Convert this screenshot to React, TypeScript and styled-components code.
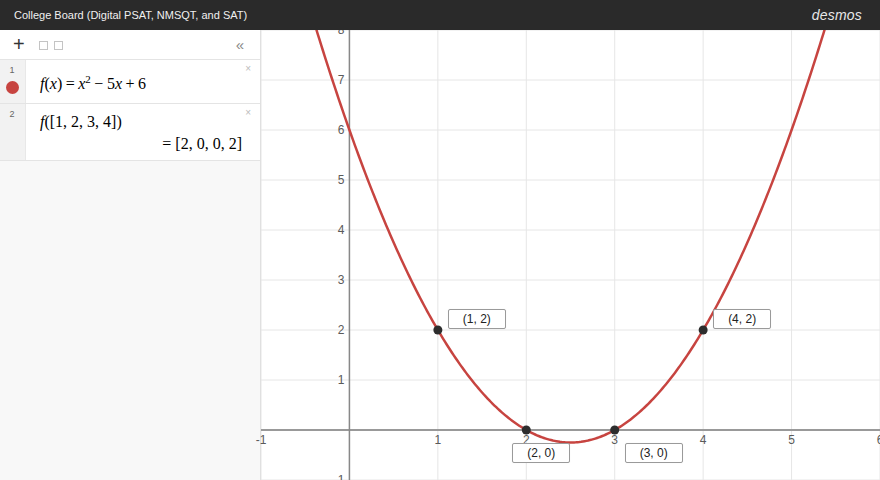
import React from 'react';
import styled, { createGlobalStyle } from 'styled-components';

const GRAPH_W = 619;
const GRAPH_H = 450;
const X_MIN = -1;
const X_MAX = 6;
const Y_MIN = -1;
const Y_MAX = 8;

const sx = (x: number) => ((x - X_MIN) / (X_MAX - X_MIN)) * GRAPH_W;
const sy = (y: number) => ((Y_MAX - y) / (Y_MAX - Y_MIN)) * GRAPH_H;

const f = (x: number) => x * x - 5 * x + 6;

const curvePath = () => {
  const pts: string[] = [];
  for (let x = -1; x <= 6.001; x += 0.02) {
    const y = f(x);
    if (y > Y_MAX + 1) continue;
    pts.push(`${pts.length ? 'L' : 'M'}${sx(x).toFixed(2)},${sy(y).toFixed(2)}`);
  }
  return pts.join(' ');
};

const points = [
  { x: 1, y: 2, label: '(1, 2)', dx: 10, dy: -21 },
  { x: 2, y: 0, label: '(2, 0)', dx: -14, dy: 13 },
  { x: 3, y: 0, label: '(3, 0)', dx: 10, dy: 13 },
  { x: 4, y: 2, label: '(4, 2)', dx: 10, dy: -21 },
];

const GlobalStyle = createGlobalStyle`
  body {
    margin: 0;
    font-family: "Liberation Sans", Arial, sans-serif;
    background: #fff;
  }
`;

const Page = styled.div`
  width: 880px;
  height: 480px;
  display: flex;
  flex-direction: column;
  overflow: hidden;
`;

const Header = styled.header`
  position: relative;
  z-index: 2;
  height: 30px;
  flex: 0 0 30px;
  background: #2a2a2a;
  display: flex;
  align-items: center;
  justify-content: space-between;
  padding: 0 18px 0 14px;
`;

const Title = styled.span`
  color: #f0f0f0;
  font-size: 11px;
`;

const Brand = styled.span`
  color: #e8e8e8;
  font-size: 14px;
  font-style: italic;
  letter-spacing: 0.2px;
`;

const Main = styled.div`
  flex: 1;
  display: flex;
  min-height: 0;
`;

const Sidebar = styled.aside`
  width: 260px;
  flex: 0 0 260px;
  background: #f8f8f8;
  border-right: 1px solid #e0e0e0;
  display: flex;
  flex-direction: column;
`;

const Toolbar = styled.div`
  height: 29px;
  background: #fff;
  border-bottom: 1px solid #e4e4e4;
  display: flex;
  align-items: center;
  padding: 0 16px 0 13px;
`;

const Plus = styled.span`
  font-size: 20px;
  color: #333;
  line-height: 1;
  margin-top: -2px;
`;

const Squares = styled.div`
  display: flex;
  gap: 6px;
  margin-left: 14px;
  margin-top: 2px;
`;

const Square = styled.span`
  width: 7px;
  height: 7px;
  border: 1px solid #c4c4c4;
`;

const Collapse = styled.span`
  margin-left: auto;
  color: #8a8a8a;
  font-size: 15px;
  line-height: 1;
`;

const Row = styled.div<{ $height: number }>`
  height: ${({ $height }) => $height}px;
  display: flex;
  background: #fff;
  border-bottom: 1px solid #e4e4e4;
`;

const Gutter = styled.div`
  width: 25px;
  flex: 0 0 25px;
  background: #f2f2f2;
  border-right: 1px solid #e8e8e8;
  display: flex;
  flex-direction: column;
  align-items: center;
`;

const RowNumber = styled.span`
  font-size: 9px;
  color: #666;
  margin-top: 5px;
  margin-right: 1px;
`;

const ColorDot = styled.span`
  width: 13px;
  height: 13px;
  border-radius: 50%;
  background: #c74440;
  margin-top: 6px;
`;

const Content = styled.div<{ $top: number }>`
  flex: 1;
  position: relative;
  padding: ${({ $top }) => $top}px 14px 0 14px;
  font-family: "Liberation Serif", "Times New Roman", serif;
  font-size: 16px;
  color: #000;
`;

const Close = styled.span`
  position: absolute;
  top: 3px;
  right: 9px;
  font-family: "Liberation Sans", Arial, sans-serif;
  font-size: 10px;
  color: #bbb;
`;

const MathLine = styled.div`
  line-height: 20px;
`;

const Result = styled.div`
  text-align: right;
  margin-top: 2px;
  padding-right: 4px;
  line-height: 20px;
`;

const V = styled.i`
  font-style: italic;
`;

const Op = styled.span`
  margin: 0 -0.5px;
`;

const Sup = styled.sup`
  font-size: 11px;
  vertical-align: 6px;
  line-height: 0;
`;

const Graph = styled.div`
  flex: 1;
  position: relative;
  z-index: 1;
`;

const Paper = styled.svg`
  display: block;
  overflow: visible;
`;

const PointLabel = styled.div`
  position: absolute;
  width: 56px;
  height: 18px;
  border: 1px solid #9a9a9a;
  border-radius: 2px;
  background: #fff;
  box-shadow: 0 0 1px rgba(0, 0, 0, 0.1);
  font-size: 12px;
  color: #222;
  display: flex;
  align-items: center;
  justify-content: center;
`;

const AxisText = styled.text`
  font-family: "Liberation Sans", Arial, sans-serif;
  font-size: 12px;
  fill: #5a5a5a;
`;

const GraphPaper = () => {
  const xs = [-1, 0, 1, 2, 3, 4, 5, 6];
  const ys = [-1, 0, 1, 2, 3, 4, 5, 6, 7, 8];
  const ox = sx(0);
  const oy = sy(0);
  return (
    <Paper width={GRAPH_W} height={GRAPH_H}>
      <defs>
        <clipPath id="plot">
          <rect x={0} y={0} width={GRAPH_W} height={GRAPH_H} />
        </clipPath>
      </defs>
      <g clipPath="url(#plot)">
        {xs.map((x) => (
          <line key={`gx${x}`} x1={sx(x)} x2={sx(x)} y1={0} y2={GRAPH_H} stroke="#e6e6e6" strokeWidth={1} />
        ))}
        {ys.map((y) => (
          <line key={`gy${y}`} x1={0} x2={GRAPH_W} y1={sy(y)} y2={sy(y)} stroke="#e6e6e6" strokeWidth={1} />
        ))}
        <line x1={0} x2={GRAPH_W} y1={oy} y2={oy} stroke="#999" strokeWidth={2} />
        <line x1={ox} x2={ox} y1={0} y2={GRAPH_H} stroke="#888" strokeWidth={1.5} />
      </g>
      {xs
        .filter((x) => x !== 0)
        .map((x) => (
          <AxisText key={`lx${x}`} x={sx(x)} y={oy + 14} textAnchor="middle">
            {x < 0 ? `-${-x}` : x}
          </AxisText>
        ))}
      {ys
        .filter((y) => y !== 0)
        .map((y) => (
          <AxisText key={`ly${y}`} x={ox - 5} y={sy(y) + 4} textAnchor="end">
            {y < 0 ? `-${-y}` : y}
          </AxisText>
        ))}
      <g clipPath="url(#plot)">
        <path d={curvePath()} fill="none" stroke="#c74440" strokeWidth={2.5} />
        {points.map((p) => (
          <circle key={p.label} cx={sx(p.x)} cy={sy(p.y)} r={4.5} fill="#2d2d2d" />
        ))}
      </g>
    </Paper>
  );
};

const App = () => {
  return (
    <>
      <GlobalStyle />
      <Page>
        <Header>
          <Title>College Board (Digital PSAT, NMSQT, and SAT)</Title>
          <Brand>desmos</Brand>
        </Header>
        <Main>
          <Sidebar>
            <Toolbar>
              <Plus>+</Plus>
              <Squares>
                <Square />
                <Square />
              </Squares>
              <Collapse>«</Collapse>
            </Toolbar>
            <Row $height={43}>
              <Gutter>
                <RowNumber>1</RowNumber>
                <ColorDot />
              </Gutter>
              <Content $top={14}>
                <Close>×</Close>
                <MathLine>
                  <V>f</V>(<V>x</V>) <Op>=</Op> <V>x</V>
                  <Sup>2</Sup> <Op>−</Op> 5<V>x</V> <Op>+</Op> 6
                </MathLine>
              </Content>
            </Row>
            <Row $height={56}>
              <Gutter>
                <RowNumber>2</RowNumber>
              </Gutter>
              <Content $top={8}>
                <Close>×</Close>
                <MathLine>
                  <V>f</V>([1, 2, 3, 4])
                </MathLine>
                <Result>= [2, 0, 0, 2]</Result>
              </Content>
            </Row>
          </Sidebar>
          <Graph>
            <GraphPaper />
            {points.map((p) => (
              <PointLabel
                key={p.label}
                style={{ left: sx(p.x) + p.dx, top: sy(p.y) + p.dy }}
              >
                {p.label}
              </PointLabel>
            ))}
          </Graph>
        </Main>
      </Page>
    </>
  );
};

export default App;
